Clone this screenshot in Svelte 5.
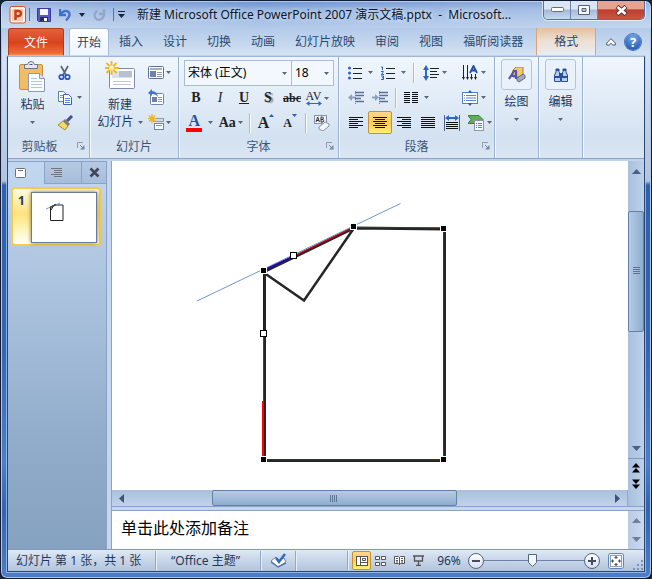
<script>
  const tabs = ['插入', '设计', '切换', '动画', '幻灯片放映', '审阅', '视图', '福昕阅读器'];
  let zoom = $state(48);
  let font = $state('宋体 (正文)');
  let size = $state('18');
</script>

{#snippet caret()}
  <svg class="caret" width="5" height="3" viewBox="0 0 5 3"><path d="M0 0h5L2.5 3z" fill="currentColor" /></svg>
{/snippet}

{#snippet launcher(name)}
  <button class="launcher" aria-label={name}>
    <svg width="8" height="8" viewBox="0 0 8 8"><path d="M.5 6V.5H6" fill="none" stroke="#8c9cb3" /><path d="M3 3l3 3" stroke="#7587a0" /><path d="M7.5 3v4.5H3z" fill="#7587a0" /></svg>
  </button>
{/snippet}

{#snippet lines(rows)}
  <svg width="14" height="12" viewBox="0 0 14 12">
    {#each rows as [x, w], i}<rect {x} y={i * 2} width={w} height="1" fill="#111" />{/each}
  </svg>
{/snippet}

{#snippet tri(dir)}
  <svg width="9" height="9" viewBox="0 0 9 9">
    {#if dir === 'up'}<path d="M0 7L4.5 2 9 7z" fill="#4c5f86" />
    {:else if dir === 'down'}<path d="M0 2h9L4.500 7z" fill="#4c5f86" />
    {:else if dir === 'left'}<path d="M7 0v9L2 4.500z" fill="#3f527c" />
    {:else}<path d="M2 0v9l5-4.500z" fill="#3f527c" />{/if}
  </svg>
{/snippet}

<div class="window">
  <header class="title">
    <svg width="18" height="18" viewBox="0 0 18 18">
      <rect x="1" y=".5" width="15.500" height="16.500" rx="2" fill="#fff4ec" stroke="#d4552b" />
      <path d="M3 3h11v12H3z" fill="#f3b08c" opacity=".6" />
      <path d="M6.500 14V5H9q3 0 3 2.500T9 10.200H7" fill="none" stroke="#c73c14" stroke-width="2.400" />
    </svg>
    <i class="tsep"></i>
    <button aria-label="保存"><svg width="14" height="14" viewBox="0 0 14 14"><path d="M.5.5h13v13h-12l-1-1z" fill="#5a58c4" /><path d="M.5.5h13v13h-12l-1-1z" fill="none" stroke="#3b399f" /><path d="M3 1h8v6H3z" fill="#f3f7ff" /><path d="M3 9h8v4H3z" fill="#2c2b63" /><path d="M7 10h3v3H7z" fill="#fff" /></svg></button>
    <button class="undo" aria-label="撤消"><svg width="13" height="14" viewBox="0 0 13 14"><path d="M1 1v6h6M1.500 6.500Q5 1.500 9 3.500q4 3-2 9" fill="none" stroke="#3d70cf" stroke-width="2.300" /></svg><svg width="6" height="4" viewBox="0 0 6 4"><path d="M0 0h6L3 4z" fill="#1a2540" /></svg></button>
    <button class="redo" aria-label="恢复"><svg width="13" height="14" viewBox="0 0 13 14"><path d="M11 1v5H6M4 2.500Q-1 8 4 11.500q5 1.500 7-4.500" fill="none" stroke="#93a6c4" stroke-width="2.300" /></svg></button>
    <i class="tsep"></i>
    <button class="qat" aria-label="自定义快速访问工具栏"><svg width="7" height="7" viewBox="0 0 7 7"><path d="M0 0h7v1H0zM0 3h7L3.500 7z" fill="#17233c" /></svg></button>
    <h1>新建 Microsoft Office PowerPoint 2007 演示文稿.pptx&nbsp; -&nbsp; Microsoft...</h1>
    <div class="winctl">
      <button aria-label="最小化"><svg width="13" height="6" viewBox="0 0 13 6"><rect x=".5" y=".5" width="12" height="4" rx="1" fill="#fff" stroke="#626d82" /></svg></button>
      <button aria-label="最大化"><svg width="12" height="10" viewBox="0 0 12 10"><path d="M.5.500h11v9H.500zM4 3.500v3h4v-3z" fill="#fff" fill-rule="evenodd" stroke="#56627a" /></svg></button>
      <button class="close" aria-label="关闭"><svg width="13" height="11" viewBox="0 0 13 11"><path d="M2 1.500l9 8M11 1.500l-9 8" stroke="#5d3136" stroke-width="4.500" /><path d="M2.500 2l8 7M10.500 2l-8 7" stroke="#fff" stroke-width="2.600" /></svg></button>
    </div>
  </header>

  <nav class="tabs">
    <button class="file">文件</button>
    <button class="tab on">开始</button>
    {#each tabs as t}<button class="tab">{t}</button>{/each}
    <button class="tab format">格式</button>
    <button class="fold" aria-label="功能区最小化"><svg width="10" height="8" viewBox="0 0 10 8"><path d="M5 .700L9.300 5v2H6.800L5 5.300 3.200 7H.700V5z" fill="#fff" stroke="#4e5a70" /></svg></button>
    <button class="help" aria-label="帮助">?</button>
  </nav>

  <main>
    <section class="ribbon">
      <div class="group clip">
        <div class="body">
          <button class="big">
            <svg width="27" height="32" viewBox="0 0 27 32">
              <rect x=".5" y="3.500" width="23" height="25" rx="1.500" fill="#efbd63" stroke="#c88f3b" />
              <path d="M5.500 3.500h3Q9 .5 12 .5t3.500 3h3v4h-13z" fill="#e4e7ec" stroke="#6c7482" /><path d="M10.500 3.500h3" stroke="#555" />
              <path d="M9.500 12.500h11l5 5v13h-16z" fill="#fbfcff" stroke="#8a98b4" /><path d="M20.500 12.500v5h5" fill="#dce4f1" stroke="#8a98b4" />
              <path d="M12 17.500h6M12 20.500h11M12 23.500h11M12 26.500h11" stroke="#b8c3d9" />
            </svg>
            <span>粘贴</span>{@render caret()}
          </button>
          <div class="col">
            <button aria-label="剪切"><svg width="16" height="16" viewBox="0 0 16 16"><path d="M4 1l5 9M11 1L6 10" stroke="#5b6575" stroke-width="1.700" /><circle cx="4.500" cy="12" r="2.200" fill="none" stroke="#2d5bbd" stroke-width="1.800" /><circle cx="10.500" cy="12" r="2.200" fill="none" stroke="#2d5bbd" stroke-width="1.800" /></svg></button>
            <button class="split" aria-label="复制"><svg width="16" height="16" viewBox="0 0 16 16"><path d="M1.500 1.500h5l3 3v7h-8z" fill="#fff" stroke="#5c7cc0" /><path d="M3 5.500h5M3 7.500h5" stroke="#7899d8" /><path d="M6.500 4.500h5l3 3v7h-8z" fill="#fff" stroke="#3d60b0" /><path d="M8 8.500h5M8 10.500h5M8 12.500h5" stroke="#5c83d4" /></svg>{@render caret()}</button>
            <button aria-label="格式刷"><svg width="17" height="16" viewBox="0 0 17 16"><path d="M15 1l-5 5" stroke="#4a4c94" stroke-width="3" /><path d="M8 4l5 5-2 2-5-5z" fill="#777b88" /><path d="M6 6l5 5-3 4-7-5z" fill="#f4dc6c" stroke="#a48a35" /></svg></button>
          </div>
        </div>
        <footer><span>剪贴板</span>{@render launcher('剪贴板')}</footer>
      </div>

      <div class="group slides">
        <div class="body">
          <button class="big">
            <svg width="31" height="32" viewBox="0 0 31 32">
              <rect x="4.500" y="7.500" width="25" height="20" rx="1" fill="#fff" stroke="#7d8ba8" /><rect x="7" y="10" width="20" height="7" fill="#dbe1ec" /><path d="M14 10h13v6H14z" fill="#b8c1d4" />
              <path d="M8 20.500h18M8 23.500h18" stroke="#c0c8d8" />
              <path d="M6.500 0v14M0 7h14M1.500 2l10 10M11.500 2l-10 10" stroke="#f3b620" stroke-width="1.800" /><circle cx="6.500" cy="7" r="2.500" fill="#fff7a0" />
            </svg>
            <span>新建</span><span class="inline">幻灯片{@render caret()}</span>
          </button>
          <div class="col">
            <button class="split" aria-label="版式"><svg width="16" height="14" viewBox="0 0 16 14"><rect x=".5" y=".5" width="15" height="12" rx="1" fill="#fff" stroke="#5d7196" /><path d="M2 2h12v2H2z" fill="#a2b0cd" /><path d="M2 5h6v6H2z" fill="#6d82aa" /><path d="M9 6.500h5M9 8.500h5M9 10.500h5" stroke="#8796b4" /></svg>{@render caret()}</button>
            <button aria-label="重设"><svg width="16" height="17" viewBox="0 0 16 17"><rect x="2.500" y="4.500" width="13" height="11" rx="1" fill="#fff" stroke="#7183a6" /><path d="M4 8h5v5H4z" fill="#6d82aa" /><path d="M10 8.500h4M10 10.500h4M10 12.500h4" stroke="#8796b4" /><path d="M0 4l4-4v2q5 0 6 6-2-3-6-3v2z" fill="#3e76d1" /></svg></button>
            <button class="split" aria-label="节"><svg width="16" height="17" viewBox="0 0 16 17"><rect x="5.500" y="4.500" width="10" height="3" fill="#d5d9e0" stroke="#9299a8" /><rect x="6.500" y="9.500" width="9" height="6" fill="#fff" stroke="#7183a6" /><path d="M8 11.500h6" stroke="#8796b4" /><path d="M4 0v9M0 4.500h8M1 1.500l6 6M7 1.500l-6 6" stroke="#efb528" stroke-width="1.300" /></svg>{@render caret()}</button>
          </div>
        </div>
        <footer><span>幻灯片</span></footer>
      </div>

      <div class="group fonts">
        <div class="body rows">
          <div class="row combos">
            <label class="combo wide"><select aria-label="字体" bind:value={font}><option>宋体 (正文)</option><option>黑体</option></select>{@render caret()}</label>
            <label class="combo"><select aria-label="字号" bind:value={size}><option>18</option><option>20</option></select>{@render caret()}</label>
          </div>
          <div class="row serif">
            <button class="w24"><b>B</b></button>
            <button class="w24"><em>I</em></button>
            <button class="w24"><u>U</u></button>
            <button class="w24"><b class="shadow">S</b></button>
            <button class="w24 abc"><s>abc</s></button>
            <button class="av" aria-label="字符间距"><span>AV<svg width="16" height="5" viewBox="0 0 16 5"><path d="M0 2.500L3.500 0v2h9V0L16 2.500 12.500 5V3h-9v2z" fill="#2f67c8" /></svg></span>{@render caret()}</button>
          </div>
          <div class="row serif">
            <button class="color" aria-label="字体颜色"><span>A</span>{@render caret()}</button>
            <button class="case" aria-label="更改大小写"><b>Aa</b>{@render caret()}</button>
            <i class="sep"></i>
            <button class="w24 grow" aria-label="增大字号"><b>A</b><svg width="5" height="3" viewBox="0 0 5 3"><path d="M0 3h5L2.500 0z" fill="#2a5fc0" /></svg></button>
            <button class="w24 shrink" aria-label="减小字号"><b>A</b><svg width="5" height="3" viewBox="0 0 5 3"><path d="M0 0h5L2.500 3z" fill="#2a5fc0" /></svg></button>
            <i class="sep"></i>
            <button class="w24" aria-label="清除格式"><svg width="17" height="17" viewBox="0 0 17 17"><rect x="1.500" y="1.500" width="12" height="8" fill="#eef2f8" stroke="#8492aa" /><path d="M3 8l1.700-5L6.500 8M3.500 6.500h2.500M8 3v5h2q1.500-1.200 0-2.500Q11 3.500 9.500 3H8M8 5.500h2" fill="none" stroke="#333" /><path d="M6 13l6-5 4 2v2l-6 5-4-2z" fill="#f6f7fb" stroke="#8790a8" /></svg></button>
          </div>
        </div>
        <footer><span>字体</span>{@render launcher('字体')}</footer>
      </div>

      <div class="group para">
        <div class="body rows">
          <div class="row">
            <button class="drop" aria-label="项目符号"><svg width="14" height="14" viewBox="0 0 14 14"><path d="M5 2.500h9M5 7.500h9M5 12.500h9" stroke="#222" /><circle cx="1.500" cy="2" r="1.500" fill="#2e5fc4" /><circle cx="1.500" cy="7" r="1.500" fill="#2e5fc4" /><circle cx="1.500" cy="12" r="1.500" fill="#2e5fc4" /></svg>{@render caret()}</button>
            <button class="drop" aria-label="编号"><svg width="14" height="14" viewBox="0 0 14 14"><path d="M5 2.500h9M5 7.500h9M5 12.500h9" stroke="#222" /><path d="M0 1h1.500v3M0 5.500h2.500L.5 8.500h2.500M0 10h2.500v3.500H0M1 11.700h1.500" fill="none" stroke="#2e5fc4" /></svg>{@render caret()}</button>
            <i class="sep"></i>
            <button class="drop tight" aria-label="行距"><svg width="16" height="16" viewBox="0 0 16 16"><path d="M0 5l3-5 3 5H4v6h2l-3 5-3-5h2V5z" fill="#2f67c8" /><path d="M7 3.500h9M7 6.500h7M7 9.500h9M7 12.500h7" stroke="#222" /></svg>{@render caret()}</button>
            <button class="drop tight last" aria-label="文字方向"><svg width="16" height="16" viewBox="0 0 16 16"><path d="M1.500 0v14M5.500 0v14M9.500 9v5M13.500 9v5" stroke="#222" /><path d="M0 12h3l-1.500 3zM4 12h3l-1.500 3zM8 12h3l-1.500 3zM12 12h3l-1.500 3z" fill="#222" /><path d="M8 8l3.500-7L15 8M9.500 5.500H14" fill="none" stroke="#264a9c" stroke-width="1.800" /></svg>{@render caret()}</button>
          </div>
          <div class="row">
            <button class="w24" aria-label="减少缩进"><svg width="16" height="14" viewBox="0 0 16 14"><path d="M7 1.500h9M7 4.500h9M7 7.500h6M7 10.500h9" stroke="#5b6f98" stroke-width="1.500" /><path d="M7.500 0v14" stroke="#7588ae" stroke-dasharray="1 1" /><path d="M0 6.500L4 3v2.500h3v2H4V10z" fill="#8ea0c0" /></svg></button>
            <button class="w24" aria-label="增加缩进"><svg width="16" height="14" viewBox="0 0 16 14"><path d="M7 1.500h9M7 4.500h9M7 7.500h6M7 10.500h9" stroke="#5b6f98" stroke-width="1.500" /><path d="M7.500 0v14" stroke="#7588ae" stroke-dasharray="1 1" /><path d="M7 6.500L3 3v2.500H0v2h3V10z" fill="#8ea0c0" /></svg></button>
            <i class="sep"></i>
            <button class="drop cols" aria-label="分栏"><svg width="14" height="12" viewBox="0 0 14 12"><path d="M0 .5h6M8 .5h6M0 2.500h6M8 2.500h6M0 4.500h6M8 4.500h6M0 6.500h6M8 6.500h6M0 8.500h6M8 8.500h6M0 10.500h6M8 10.500h6" stroke="#111" /></svg>{@render caret()}</button>
            <button class="drop tight last" aria-label="对齐文本"><svg width="16" height="16" viewBox="0 0 16 16"><rect x=".5" y="2.500" width="15" height="11" fill="#fff" stroke="#5c7dc0" /><path d="M2 5.500h12M2 8h12M2 10.500h12" stroke="#5b83cc" stroke-dasharray="1 1 10 1" /><path d="M5.500 3h5L8 0zM5.500 13h5L8 16z" fill="#2f5fc0" /></svg>{@render caret()}</button>
          </div>
          <div class="row">
            <button class="w24" aria-label="左对齐">{@render lines([[0, 14], [0, 9], [0, 14], [0, 9], [0, 14], [0, 9]])}</button>
            <button class="w24 active" aria-label="居中">{@render lines([[0, 14], [2, 10], [0, 14], [2, 10], [0, 14], [2, 10]])}</button>
            <button class="w24" aria-label="右对齐">{@render lines([[0, 14], [5, 9], [0, 14], [5, 9], [0, 14], [5, 9]])}</button>
            <button class="w24" aria-label="两端对齐">{@render lines([[0, 14], [0, 14], [0, 14], [0, 14], [0, 14], [0, 14]])}</button>
            <button class="w24" aria-label="分散对齐"><svg width="16" height="16" viewBox="0 0 16 16"><path d="M.500 0v16M15.500 0v16" stroke="#4e628c" /><path d="M1 3l4-3v2h6V0l4 3-4 3V4H5v2z" fill="#2f67c8" /><path d="M2 7.500h12M2 9.500h12M2 11.500h12M2 13.500h12" stroke="#111" /></svg></button>
            <button class="drop tight last" aria-label="转换为 SmartArt"><svg width="16" height="16" viewBox="0 0 16 16"><path d="M0 .5h11l4 4-4 4H0l3-4z" fill="#5fae57" stroke="#3a8438" /><rect x="6.500" y="5.500" width="9" height="10" fill="#f6faff" stroke="#8797b0" /><path d="M8 8.500h1M8 10.500h1M8 12.500h1M10 8.500h4M10 10.500h4M10 12.500h4" stroke="#4d8e9a" /></svg>{@render caret()}</button>
          </div>
        </div>
        <footer><span>段落</span>{@render launcher('段落')}</footer>
      </div>

      <div class="group single">
        <button class="chunk">
          <span class="tile"><svg width="18" height="16" viewBox="0 0 18 16"><path d="M5 3l3-3h7v7l-3 3H5z" fill="#f0cd5c" stroke="#a2813b" /><path d="M1 12L6 4h2v8M3 9h5" fill="none" stroke="#5651b5" stroke-width="2.200" /><path d="M9 11l6-4q3 1 2 4l-6 4q-3-1-2-4z" fill="#9eabc0" stroke="#626c80" /></svg></span>
          <span>绘图</span>{@render caret()}
        </button>
      </div>
      <div class="group single">
        <button class="chunk">
          <span class="tile"><svg width="16" height="14" viewBox="0 0 16 14"><path d="M3 1h3v3l1.500 2v7.500h-6V7L3 4zM10 1h3v3l1.500 3v6.500h-6V6L10 4z" fill="#b9cdf1" stroke="#29509a" /><path d="M2 8h5v2H2zM9 8h5v2H9zM6 5h4v3H6zM3 1h3v2H3zM10 1h3v2h-3z" fill="#29509a" /></svg></span>
          <span>编辑</span>{@render caret()}
        </button>
      </div>
    </section>

    <section class="work">
      <aside>
        <div class="ptabs">
          <button class="on" aria-label="幻灯片"><svg width="11" height="10" viewBox="0 0 11 10"><rect x=".5" y=".5" width="10" height="9" rx="1" fill="#fff" stroke="#6e7177" /><path d="M3 2.500h5" stroke="#6e7177" /></svg></button>
          <button class="outline" aria-label="大纲"><svg width="12" height="10" viewBox="0 0 12 10"><path d="M0 .5h11M3 2.500h8M3 4.500h8M0 6.500h11M3 8.500h8" stroke="#70757d" /></svg></button>
          <button class="x" aria-label="关闭"><svg width="11" height="11" viewBox="0 0 11 11"><path d="M1.500 1.500l8 8M9.500 1.500l-8 8" stroke="#3f4756" stroke-width="2.600" /></svg></button>
        </div>
        <button class="thumb" aria-label="幻灯片 1">
          <b>1</b>
          <svg viewBox="0 0 64 49"><path d="M18.500 14v13.500h12.500V12H22l-3 5-1-3z" fill="none" stroke="#222" /><path d="M14 16l14-6" stroke="#6f9bd0" /><path d="M18 14.500l6-3" stroke="#444" stroke-width="1.500" /></svg>
        </button>
      </aside>
      <div class="split-v"></div>
      <div class="editor">
        <div class="pane">
          <div class="left">
            <svg class="slide" viewBox="112 161 516 329" preserveAspectRatio="xMinYMin meet">
              <path d="M197 301L400.500 203.500" stroke="#6c97cf" />
              <path d="M264.500 271.500L354 228l90.500 1v231.500h-180z" fill="none" stroke="#262626" stroke-width="3" />
              <path d="M265 273.500L304 300.500 354 228" fill="none" stroke="#262626" stroke-width="2.500" />
              <path d="M264 270l30-14" stroke="#2a00b8" stroke-width="1.600" />
              <path d="M294 256l60-29" stroke="#e00010" stroke-width="1.200" />
              <path d="M263.500 272v62" stroke="#2200a8" />
              <path d="M263.500 334v67" stroke="#a33" opacity=".6" />
              <path d="M263 401v59" stroke="#f00" stroke-width="2" />
              <path d="M354 227.500h90M443.500 229v231M264 459.500h180" stroke="#d00" stroke-width="1" opacity=".6" />
              {#each [[263, 270], [353, 226], [443, 228], [443, 459], [263, 459]] as [x, y]}
                <rect x={x - 3} y={y - 3} width="7" height="7" fill="#fff" /><rect x={x - 2} y={y - 2} width="5" height="5" fill="#000" />
              {/each}
              {#each [[293, 255], [263, 333]] as [x, y]}<rect x={x - 2.5} y={y - 2.5} width="6" height="6" fill="#fff" stroke="#000" />{/each}
            </svg>
            <div class="hbar">
              <button aria-label="向左">{@render tri('left')}</button>
              <div class="track"><i style:flex="82"></i><div class="grip" style:flex="244"><svg width="8" height="7" viewBox="0 0 8 7"><path d="M.5 0v7M2.500 0v7M4.500 0v7M6.500 0v7" stroke="#5e7598" /></svg></div><i style:flex="152"></i></div>
              <button aria-label="向右">{@render tri('right')}</button>
            </div>
          </div>
          <div class="vbar">
            <button aria-label="向上">{@render tri('up')}</button>
            <div class="track"><i style:flex="30"></i><div class="grip" style:flex="121"><svg width="7" height="8" viewBox="0 0 7 8"><path d="M0 .5h7M0 2.500h7M0 4.500h7M0 6.500h7" stroke="#5e7598" /></svg></div><i style:flex="108"></i></div>
            <button aria-label="向下">{@render tri('down')}</button>
            <div class="pages">
              <button aria-label="上一张"><svg width="8" height="10" viewBox="0 0 8 10"><path d="M0 4.500L4 0l4 4.500zM0 9.500L4 5l4 4.500z" /></svg></button>
              <button aria-label="下一张"><svg width="8" height="10" viewBox="0 0 8 10"><path d="M0 .500h8L4 5zM0 5.500h8L4 10z" /></svg></button>
            </div>
          </div>
        </div>
        <div class="split-h"></div>
        <div class="notes">
          <input aria-label="备注" value="单击此处添加备注" />
          <div class="vbar dim"><button aria-label="备注向上">{@render tri('up')}</button><button aria-label="备注向下">{@render tri('down')}</button></div>
        </div>
      </div>
    </section>

    <footer class="status">
      <span class="cell pos">幻灯片 第 1 张，共 1 张</span>
      <span class="cell theme">“Office 主题”</span>
      <button class="cell spell" aria-label="拼写检查"><svg width="17" height="15" viewBox="0 0 17 15"><path d="M1 8l5-4 3 3 5-2 2 4-8 5z" fill="#fff" stroke="#6881ac" /><path d="M1 9l7 5 8-4" fill="none" stroke="#5577b5" stroke-width="1.500" /><path d="M6 5l3 4 6-8" fill="none" stroke="#3567bd" stroke-width="2.400" /></svg></button>
      <span class="cell gap"></span>
      <div class="views">
        <button class="active" aria-label="普通视图"><svg width="12" height="10" viewBox="0 0 12 10"><rect x=".5" y=".5" width="11" height="9" fill="#fff" stroke="#555" /><path d="M4.500 0v10M5 6.500h7" stroke="#555" /><path d="M6.500 2.500h3v2h-3z" fill="none" stroke="#555" /></svg></button>
        <button aria-label="幻灯片浏览"><svg width="11" height="10" viewBox="0 0 11 10"><path d="M.5.500h4v3h-4zM6.500.500h4v3h-4zM.5 6.500h4v3h-4zM6.500 6.500h4v3h-4z" fill="#fff" stroke="#555" /></svg></button>
        <button aria-label="阅读视图"><svg width="11" height="11" viewBox="0 0 11 11"><path d="M.5 1.500h4l1 1 1-1h4v7h-4l-1 1-1-1h-4z" fill="#fff" stroke="#555" /><path d="M5.500 2v8M2 3.500h2M2 5.500h2M2 7h2M7 3.500h2M7 5.500h2M7 7h2" stroke="#555" /></svg></button>
        <button aria-label="幻灯片放映"><svg width="11" height="11" viewBox="0 0 11 11"><path d="M0 1h11M1.500 1v5h8V1M5.500 6v4M3 10.500h5" fill="none" stroke="#555" stroke-width="1.300" /></svg></button>
      </div>
      <button class="pct">96%</button>
      <button class="round" aria-label="缩小"><svg width="8" height="8" viewBox="0 0 8 8"><path d="M0 4h8" stroke="#444d5e" stroke-width="2" /></svg></button>
      <input type="range" aria-label="显示比例" min="0" max="100" bind:value={zoom} />
      <button class="round" aria-label="放大"><svg width="8" height="8" viewBox="0 0 8 8"><path d="M0 4h8M4 0v8" stroke="#444d5e" stroke-width="2" /></svg></button>
      <button class="fit" aria-label="适应窗口"><svg width="16" height="16" viewBox="0 0 16 16"><rect x=".5" y=".5" width="15" height="15" rx="2" fill="#e9f0fa" stroke="#5b86bf" /><rect x="2.500" y="2.500" width="11" height="11" fill="#fff" stroke="#444" stroke-dasharray="1 1" /><path d="M8 3v3M8 10v3M3 8h3M10 8h3M6.500 4.500h3M6.500 11.500h3M4.500 6.500v3M11.500 6.500v3" stroke="#444" /></svg></button>
      <svg class="resize" width="11" height="11" viewBox="0 0 11 11"><path d="M8 0h2v2H8zM4 4h2v2H4zM8 4h2v2H8zM0 8h2v2H0zM4 8h2v2H4zM8 8h2v2H8z" fill="#7b95bb" /></svg>
    </footer>
  </main>
</div>

<style>
  :global(body) { margin: 0; background: #1a2238; }
  .window { box-sizing: border-box; height: 100vh; min-height: 480px; display: flex; flex-direction: column; overflow: hidden;
    font: 12px/16px "Noto Sans", "Noto Sans CJK SC", sans-serif; color: #1e395b;
    border-radius: 7px; border: 1px solid #131a33; box-shadow: inset 0 0 0 1px #a9c8f0;
    background: linear-gradient(#6c92d0 0, #8fafdf 8px, #b4cbea 28px, #d5e2f2 55px, #c0cee3 130px, #b4c3dc 180px, #2f61ad 184px, #3565b2 60%, #4d7fc6 80%, #3464b0 88%, #4c7dc5 100%); }
  button { font: inherit; color: inherit; background: none; border: 0; padding: 0; margin: 0; display: flex; align-items: center; justify-content: center; }
  svg { display: block; flex: none; }
  i { display: block; }
  .caret { color: #5b6677; }

  .title { flex: none; height: 27px; display: flex; align-items: center; padding: 0 6px 0 8px; box-sizing: border-box;
    background: linear-gradient(90deg, rgba(255,255,255,.3), rgba(255,255,255,.15) 20%, rgba(255,255,255,0) 40%, rgba(255,255,255,.1) 60%, rgba(255,255,255,.25)); }
  .tsep { width: 1px; height: 13px; background: #5b7299; margin: 0 7px 0 2px; }
  .title .undo { gap: 7px; margin-left: 8px; }
  .title .redo { margin: 0 5px 0 8px; }
  .title .tsep + .qat { margin-left: -3px; }
  .title h1 { font: inherit; color: #0c1526; margin: 0 0 0 12px; flex: 1; white-space: nowrap; overflow: hidden; text-shadow: 0 0 6px #fff; }
  .winctl { display: flex; align-self: flex-start; border: 1px solid #57719c; border-top: 0; border-radius: 0 0 5px 5px; overflow: hidden; box-shadow: 0 0 0 1px rgba(255,255,255,.6); }
  .winctl button { width: 27px; height: 18px; border-right: 1px solid #6d84aa; background: linear-gradient(#dbe6f4 0 45%, #a4b9d7 50%, #c7d9f0); }
  .winctl .close { width: 46px; border-right: 0; background: linear-gradient(#e5a394 0 42%, #bc3f2c 50%, #c85642); }

  .tabs { flex: none; height: 28px; display: flex; align-items: stretch; padding: 0 10px 0 7px; color: #28496f; }
  .file { width: 56px; margin-right: 5px; color: #fff; border: 1px solid #b53a17; border-bottom: 0; border-radius: 3px 3px 0 0; background: linear-gradient(#e5623c, #d8421f 50%, #f06c34 90%, #ffa05c); }
  .tab { padding: 0 10px; white-space: nowrap; }
  .tab.on { padding: 0 7px; border: 1px solid #a6bcdb; border-bottom: 0; border-radius: 3px 3px 0 0; background: linear-gradient(#fff, #eef5fd); }
  .tab.format { width: 60px; margin-left: 3px; border: 1px solid #e0a36b; border-width: 0 1px; background: linear-gradient(#e4bf9f, #eddfd3 45%, #e8eef6); }
  .fold { margin-left: auto; margin-right: 9px; }
  .help { align-self: center; width: 16px; height: 16px; border-radius: 50%; color: #fff; font-weight: 700; font-size: 13px; background: radial-gradient(circle at 50% 25%, #79a9ea, #2b62b8 75%); box-shadow: 0 0 0 1px #4674b8; }

  main { flex: 1; min-height: 0; display: flex; flex-direction: column; margin: 0 6px 6px; border: 1px solid #2a4672; border-top-color: #a0b6d6; box-shadow: 0 0 0 1px rgba(175,205,245,.7); background: #bfd3ec; }

  .ribbon { flex: none; display: flex; height: 101px; background: linear-gradient(#eff6fd, #dfeaf6 50%, #d3e1f0 80%, #dce6f3); border-bottom: 1px solid #8ba3c5; color: #1e395b; }
  .group { flex: none; box-sizing: border-box; display: flex; flex-direction: column; border-right: 1px solid #9db3d1; box-shadow: 1px 0 #f3f8fd; }
  .group footer { height: 23px; display: flex; align-items: center; justify-content: center; color: #3b5578; position: relative; }
  .launcher { position: absolute; right: 4px; top: 7px; }
  .body { height: 78px; display: flex; }
  .rows { flex-direction: column; box-sizing: border-box; padding: 3px 4px 0 5px; }
  .row { flex: 1; display: flex; align-items: center; }
  .clip { width: 82px; }
  .clip footer { padding-right: 18px; }
  .slides { width: 89px; }
  .fonts { width: 160px; }
  .para { width: 156px; }
  .single { width: 44px; }
  .big { flex-direction: column; justify-content: flex-start; padding-top: 4px; width: 49px; }
  .big span { margin-top: 4px; }
  .big span + .caret { margin-top: 8px; }
  .big .inline { display: flex; align-items: center; gap: 4px; margin-top: 1px; white-space: nowrap; }
  .slides .big { width: 58px; padding-left: 2px; }
  .col { display: flex; flex-direction: column; padding-top: 3px; }
  .col button { height: 25px; justify-content: flex-start; }
  .col .split { gap: 4px; }
  .slides .split { gap: 2px; }
  .combos { flex: none; height: 26px; gap: 0; }
  .combo { position: relative; display: flex; flex: 1; }
  .combo.wide { flex: 0 0 108px; }
  .combo + .combo select { border-left: 0; }
  .combo select { appearance: none; box-sizing: border-box; width: 100%; height: 26px; padding: 0 3px; border: 1px solid #a7bfdc; border-radius: 0; background: #f3f8fe; font: inherit; color: #000; }
  .combo .caret { position: absolute; right: 5px; top: 12px; pointer-events: none; }
  .w24 { width: 24px; height: 23px; flex: none; }
  .serif button { font: 14px/16px "Liberation Serif", serif; color: #222; }
  .serif u { font-weight: 700; }
  .shadow { text-shadow: 2px 1px 1px #8e949c; }
  .serif .abc { font-size: 12px; font-weight: 700; }
  .serif .av { gap: 2px; width: 26px; font-size: 12px; line-height: 10px; }
  .serif .color { width: 33px; gap: 6px; }
  .color span { width: 16px; font-size: 16px; font-weight: 700; line-height: 15px; color: #2c5196; border-bottom: 4px solid #f00; }
  .serif .case { width: 32px; gap: 2px; }
  .sep { width: 1px; height: 20px; margin: 0 4px 0 3px; background: #aabdd7; box-shadow: 1px 0 #f7fbff; }
  .serif .grow { font-size: 16px; }
  .grow svg, .shrink svg { align-self: flex-start; margin-top: 3px; }
  .serif .shrink { font-size: 12px; }
  .drop { padding: 0 4px; gap: 6px; width: 33px; height: 23px; flex: none; }
  .drop.tight { gap: 3px; }
  .last { margin-left: auto; padding: 0; width: 32px; }
  .cols { padding: 0; }
  .active { box-sizing: border-box; border: 1px solid #c29233; border-radius: 2px; background: linear-gradient(#fcd989, #fbcc5a 50%, #fff07a); }
  .chunk { flex-direction: column; justify-content: flex-start; padding-top: 2px; }
  .tile { width: 29px; height: 29px; display: flex; align-items: center; justify-content: center; border: 1px solid #b4c5db; border-radius: 3px; margin-bottom: 4px; background: #e9f1fa; }
  .chunk .caret { margin-top: 8px; }

  .work { flex: 1; min-height: 0; display: flex; margin-top: 2px; }
  aside { flex: none; width: 98px; border-top: 1px solid #8aa2c6; border-right: 1px solid #89a2c6; background: linear-gradient(#c3d8f0, #b4cae5 20%, #8fabc9 75%, #86a2c1); }
  .ptabs { display: flex; height: 22px; }
  .ptabs button { box-sizing: border-box; border: 1px solid #8ba3c5; border-width: 0 0 1px 1px; background: linear-gradient(#b6cae3, #a6bddb); }
  .ptabs .on { width: 36px; border: 0; background: none; padding-right: 12px; }
  .ptabs .outline { width: 37px; padding-right: 12px; }
  .ptabs .x { flex: 1; }
  .thumb { box-sizing: border-box; width: 90px; height: 59px; margin: 3px 0 0 3px; padding: 3px 2px; border: 2px solid #f5cd4b; border-radius: 4px; justify-content: space-between; align-items: flex-start; background: linear-gradient(#fffbe2, #ffe27c 45%, #fff6bd 75%, #fff); }
  .thumb b { margin: 1px 0 0 3px; }
  .thumb svg { width: 64px; height: 49px; background: #fff; border: 1px solid #6c7c96; box-shadow: 0 0 4px #806f3c; }
  .split-v { flex: none; width: 4px; background: #c4d7ef; border-right: 1px solid #89a2c6; }
  .editor { flex: 1; min-width: 0; display: flex; flex-direction: column; }
  .pane { flex: 1; min-height: 0; display: flex; }
  .left { flex: 1; min-width: 0; display: flex; flex-direction: column; background: #fff; }
  .slide { flex: 1; min-height: 0; width: 100%; }
  .hbar { flex: none; height: 16px; display: flex; background: linear-gradient(#a9bfdb, #c0d3ea); }
  .hbar button { width: 18px; }
  .hbar button:last-child { width: 20px; border-right: 1px solid #91a9ca; }
  .track { flex: 1; display: flex; }
  .grip { display: flex; align-items: center; justify-content: center; box-sizing: border-box; border: 1px solid #6481a8; border-radius: 2px; background: linear-gradient(#b5cbe6, #8fadcf); }
  .vbar { flex: none; width: 16px; display: flex; flex-direction: column; background: linear-gradient(90deg, #a9bfdd, #bdd1ea); }
  .vbar button { height: 20px; }
  .vbar .track { flex-direction: column; }
  .vbar .grip { background: linear-gradient(90deg, #b5cbe6, #8fadcf); }
  .pages { height: 48px; border-top: 1px solid #7f99bf; display: flex; flex-direction: column; align-items: center; padding-top: 1px; box-sizing: border-box; }
  .pages button { height: 16px; }
  .split-h { flex: none; height: 3px; background: #c4d7ef; border: 1px solid #89a2c6; border-width: 1px 0; }
  .notes { flex: none; height: 38px; display: flex; background: #fff; }
  .notes input { flex: 1; min-width: 0; box-sizing: border-box; border: 0; padding: 0 9px 4px; font: 16px/20px "Noto Sans", "Noto Sans CJK SC", sans-serif; color: #000; }
  .dim { opacity: .8; justify-content: space-between; }
  .dim button { height: 19px; }

  .status { flex: none; height: 22px; box-sizing: border-box; display: flex; align-items: center; border-top: 1px solid #7f99bf; background: linear-gradient(#e0e9f5, #c9d7ea 45%, #b3c4db); }
  .cell { box-sizing: border-box; height: 20px; line-height: 20px; border-right: 1px solid #93a8c6; box-shadow: 1px 0 #e6eef8; white-space: nowrap; }
  .pos { width: 148px; padding-left: 8px; }
  .theme { width: 105px; padding-left: 15px; }
  .spell { width: 35px; }
  .gap { flex: 1; }
  .views { display: flex; margin-left: 4px; }
  .views button { width: 19px; height: 19px; }
  .pct { width: 38px; margin-left: 2px; }
  .round { box-sizing: border-box; width: 16px; height: 16px; border: 1px solid #56657f; border-radius: 50%; background: linear-gradient(#fff, #d5dfee); }
  .status input { appearance: none; width: 100px; height: 16px; margin: 0; background: linear-gradient(#6d84aa, #6d84aa) center / 100% 1px no-repeat; }
  .status input::-webkit-slider-thumb { appearance: none; width: 9px; height: 13px; border: 0; background: url("data:image/svg+xml,%3Csvg xmlns='http://www.w3.org/2000/svg' width='9' height='13'%3E%3Cpath d='M.5.5h8v8l-4 4-4-4z' fill='%23f2f6fc' stroke='%2356657f'/%3E%3C/svg%3E") no-repeat; }
  .fit { margin: 0 9px 0 8px; }
  .resize { align-self: flex-end; }
</style>
